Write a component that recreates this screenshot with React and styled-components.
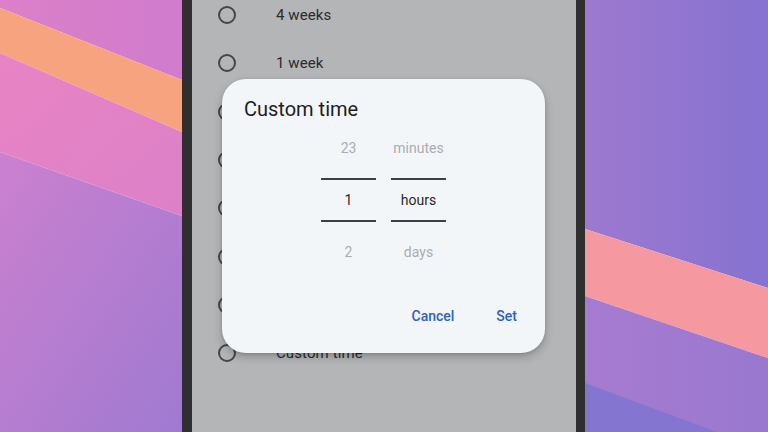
import React from 'react';
import styled, { createGlobalStyle } from 'styled-components';

const GlobalStyle = createGlobalStyle`
  html, body {
    margin: 0;
    padding: 0;
    width: 768px;
    height: 432px;
    overflow: hidden;
    font-family: Roboto, "Liberation Sans", sans-serif;
  }
`;

const Stage = styled.div`
  display: flex;
  width: 768px;
  height: 432px;
  overflow: hidden;
`;

const Wallpaper = styled.div`
  flex: 0 0 ${p => p.$w}px;
  height: 432px;
  svg { display: block; }
`;

const Bezel = styled.div`
  flex: 0 0 ${p => p.$w}px;
  background: #2f2f2f;
`;

const Screen = styled.div`
  position: relative;
  flex: 0 0 384px;
  height: 432px;
  background: #b4b5b6;
  overflow: hidden;
`;

const OptionList = styled.div`
  display: flex;
  flex-direction: column;
  margin-top: -9px;
`;

const OptionRow = styled.div`
  display: flex;
  align-items: center;
  height: 48.3px;
  padding-left: 26px;
  gap: 40px;
`;

const Radio = styled.span`
  box-sizing: border-box;
  width: 18px;
  height: 18px;
  border-radius: 50%;
  border: 2px solid #454648;
`;

const OptionLabel = styled.span`
  font-size: 15px;
  color: #2a2b2c;
  letter-spacing: 0.1px;
`;

const Dialog = styled.div`
  position: absolute;
  left: 30px;
  top: 79px;
  width: 323px;
  height: 274px;
  box-sizing: border-box;
  padding: 18px 12px 0 22px;
  background: #f3f6f9;
  border-radius: 24px;
  box-shadow: 0 4px 10px rgba(0, 0, 0, 0.22), 0 1px 3px rgba(0, 0, 0, 0.12);
  display: flex;
  flex-direction: column;
`;

const Title = styled.div`
  font-size: 20px;
  line-height: 24px;
  color: #1d1e20;
`;

const Picker = styled.div`
  display: flex;
  justify-content: center;
  gap: 15px;
  margin-top: 5px;
  padding-right: 10px;
`;

const Column = styled.div`
  display: flex;
  flex-direction: column;
  gap: 8px;
  width: 55px;
`;

const Cell = styled.div`
  box-sizing: border-box;
  height: 44px;
  display: flex;
  align-items: center;
  justify-content: center;
  font-size: 14px;
  color: ${p => (p.$active ? '#26282a' : '#a9adb2')};
  border-top: ${p => (p.$active ? '2px solid #3d4043' : 'none')};
  border-bottom: ${p => (p.$active ? '2px solid #3d4043' : 'none')};
`;

const Actions = styled.div`
  display: flex;
  justify-content: flex-end;
  gap: 10px;
  margin-top: 24px;
`;

const TextButton = styled.button`
  height: 36px;
  padding: 0 16px;
  border: none;
  background: transparent;
  font-family: Roboto, "Liberation Sans", sans-serif;
  font-size: 14px;
  font-weight: 500;
  color: #2c62bf;
  cursor: pointer;
`;

const LeftArt = () => (
  <svg width="182" height="432" viewBox="0 0 182 432">
    <defs>
      <linearGradient id="lTop" x1="0" y1="0" x2="1" y2="0">
        <stop offset="0" stopColor="#dc80c8" />
        <stop offset="1" stopColor="#d07bcd" />
      </linearGradient>
      <linearGradient id="lMid" x1="0" y1="0" x2="1" y2="1">
        <stop offset="0" stopColor="#e884c4" />
        <stop offset="1" stopColor="#dc80c8" />
      </linearGradient>
      <linearGradient id="lLow" x1="0" y1="0" x2="1" y2="1">
        <stop offset="0" stopColor="#cc80cf" />
        <stop offset="1" stopColor="#9f7ad1" />
      </linearGradient>
    </defs>
    <polygon points="0,0 182,0 182,80 0,8" fill="url(#lTop)" />
    <polygon points="0,8 182,80 182,132 0,53" fill="#f7a37f" />
    <polygon points="0,53 182,132 182,216 0,152" fill="url(#lMid)" />
    <polygon points="0,152 182,216 182,432 0,432" fill="url(#lLow)" />
  </svg>
);

const RightArt = () => (
  <svg width="183" height="432" viewBox="0 0 183 432">
    <defs>
      <linearGradient id="rTop" x1="0" y1="0" x2="1" y2="0">
        <stop offset="0" stopColor="#9d79cf" />
        <stop offset="1" stopColor="#8672d1" />
      </linearGradient>
      <linearGradient id="rMid" x1="0" y1="0" x2="1" y2="0">
        <stop offset="0" stopColor="#a67bd0" />
        <stop offset="1" stopColor="#9a78cf" />
      </linearGradient>
    </defs>
    <polygon points="0,0 183,0 183,288 0,229" fill="url(#rTop)" />
    <polygon points="0,229 183,288 183,358 0,296" fill="#f6989f" />
    <polygon points="0,296 183,358 183,432 0,432" fill="url(#rMid)" />
    <polygon points="0,383 132,432 0,432" fill="#8475d0" />
  </svg>
);

const options = ['4 weeks', '1 week', '1 day', '8 hours', '1 hour', '30 minutes', '15 minutes', 'Custom time'];

export default function App() {
  return (
    <Stage>
      <GlobalStyle />
      <Wallpaper $w={182}>
        <LeftArt />
      </Wallpaper>
      <Bezel $w={10} />
      <Screen>
        <OptionList>
          {options.map(label => (
            <OptionRow key={label}>
              <Radio />
              <OptionLabel>{label}</OptionLabel>
            </OptionRow>
          ))}
        </OptionList>
        <Dialog>
          <Title>Custom time</Title>
          <Picker>
            <Column>
              <Cell>23</Cell>
              <Cell $active>1</Cell>
              <Cell>2</Cell>
            </Column>
            <Column>
              <Cell>minutes</Cell>
              <Cell $active>hours</Cell>
              <Cell>days</Cell>
            </Column>
          </Picker>
          <Actions>
            <TextButton>Cancel</TextButton>
            <TextButton>Set</TextButton>
          </Actions>
        </Dialog>
      </Screen>
      <Bezel $w={9} />
      <Wallpaper $w={183}>
        <RightArt />
      </Wallpaper>
    </Stage>
  );
}
